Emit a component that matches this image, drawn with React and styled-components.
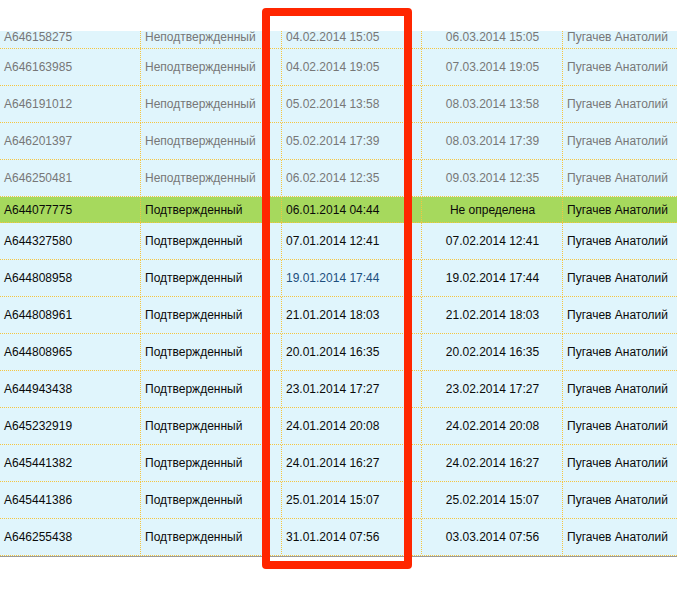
import React from "react";
import styled, { createGlobalStyle } from "styled-components";

const rows = [
  { id: "A646158275", status: "Неподтвержденный", start: "04.02.2014 15:05", end: "06.03.2014 15:05", kind: "pending", size: "top" },
  { id: "A646163985", status: "Неподтвержденный", start: "04.02.2014 19:05", end: "07.03.2014 19:05", kind: "pending" },
  { id: "A646191012", status: "Неподтвержденный", start: "05.02.2014 13:58", end: "08.03.2014 13:58", kind: "pending" },
  { id: "A646201397", status: "Неподтвержденный", start: "05.02.2014 17:39", end: "08.03.2014 17:39", kind: "pending" },
  { id: "A646250481", status: "Неподтвержденный", start: "06.02.2014 12:35", end: "09.03.2014 12:35", kind: "pending" },
  { id: "A644077775", status: "Подтвержденный", start: "06.01.2014 04:44", end: "Не определена", kind: "active", size: "short" },
  { id: "A644327580", status: "Подтвержденный", start: "07.01.2014 12:41", end: "07.02.2014 12:41", kind: "done" },
  { id: "A644808958", status: "Подтвержденный", start: "19.01.2014 17:44", end: "19.02.2014 17:44", kind: "done", link: true },
  { id: "A644808961", status: "Подтвержденный", start: "21.01.2014 18:03", end: "21.02.2014 18:03", kind: "done" },
  { id: "A644808965", status: "Подтвержденный", start: "20.01.2014 16:35", end: "20.02.2014 16:35", kind: "done" },
  { id: "A644943438", status: "Подтвержденный", start: "23.01.2014 17:27", end: "23.02.2014 17:27", kind: "done" },
  { id: "A645232919", status: "Подтвержденный", start: "24.01.2014 20:08", end: "24.02.2014 20:08", kind: "done" },
  { id: "A645441382", status: "Подтвержденный", start: "24.01.2014 16:27", end: "24.02.2014 16:27", kind: "done" },
  { id: "A645441386", status: "Подтвержденный", start: "25.01.2014 15:07", end: "25.02.2014 15:07", kind: "done" },
  { id: "A646255438", status: "Подтвержденный", start: "31.01.2014 07:56", end: "03.03.2014 07:56", kind: "done" },
];

const heights = { top: 18, short: 26, normal: 37 };
const dot = "#f5c540";

const GlobalStyle = createGlobalStyle`
  html, body {
    margin: 0;
    padding: 0;
    background: #ffffff;
  }
  body {
    font-family: "Liberation Sans", Arial, sans-serif;
  }
  * {
    box-sizing: border-box;
  }
`;

const Page = styled.div`
  position: relative;
  width: 677px;
  height: 601px;
  overflow: hidden;
  padding-top: 31px;
`;

const Viewport = styled.div`
  overflow: hidden;
  width: 677px;
`;

const Table = styled.div`
  width: 704px;
  border-bottom: 1px solid #9a9a9a;
`;

const Row = styled.div`
  display: grid;
  grid-template-columns: 141px 141px 140px 141px 141px;
  height: ${(p) => heights[p.$size || "normal"]}px;
  padding-bottom: 1px;
  background-color: ${(p) => (p.$kind === "active" ? "#a6d95d" : "#e0f5fc")};
  background-image: repeating-linear-gradient(to right, ${dot} 0 1px, transparent 1px 2px);
  background-size: 100% 1px;
  background-position: left bottom;
  background-repeat: no-repeat;
  color: ${(p) => (p.$kind === "pending" ? "#777777" : "#0a0a0a")};
  font-size: 12px;
  line-height: ${(p) => (p.$size === "top" ? 12 : 14)}px;
`;

const Cell = styled.div`
  display: flex;
  align-items: ${(p) => (p.$top ? "flex-start" : "center")};
  justify-content: ${(p) => (p.$center ? "center" : "flex-start")};
  padding-left: ${(p) => (p.$center ? 0 : 4)}px;
  height: 100%;
  background-image: repeating-linear-gradient(to bottom, ${dot} 0 1px, transparent 1px 2px);
  background-size: 1px 100%;
  background-position: right top;
  background-repeat: no-repeat;
  white-space: nowrap;
  overflow: hidden;
  color: ${(p) => (p.$link ? "#1d4f7e" : "inherit")};

  &:last-child {
    background-image: none;
  }
`;

const Highlight = styled.div`
  position: absolute;
  left: 262px;
  top: 8px;
  width: 150px;
  height: 561px;
  border: 8px solid #ff2600;
  border-radius: 4px;
  pointer-events: none;
`;

export default function App() {
  return (
    <>
      <GlobalStyle />
      <Page>
        <Viewport>
          <Table>
            {rows.map((r) => {
              const top = r.size === "top";
              return (
                <Row key={r.id} $kind={r.kind} $size={r.size}>
                  <Cell $top={top}>{r.id}</Cell>
                  <Cell $top={top}>{r.status}</Cell>
                  <Cell $top={top} $link={r.link}>{r.start}</Cell>
                  <Cell $top={top} $center>{r.end}</Cell>
                  <Cell $top={top}>Пугачев Анатолий</Cell>
                </Row>
              );
            })}
          </Table>
        </Viewport>
        <Highlight />
      </Page>
    </>
  );
}
